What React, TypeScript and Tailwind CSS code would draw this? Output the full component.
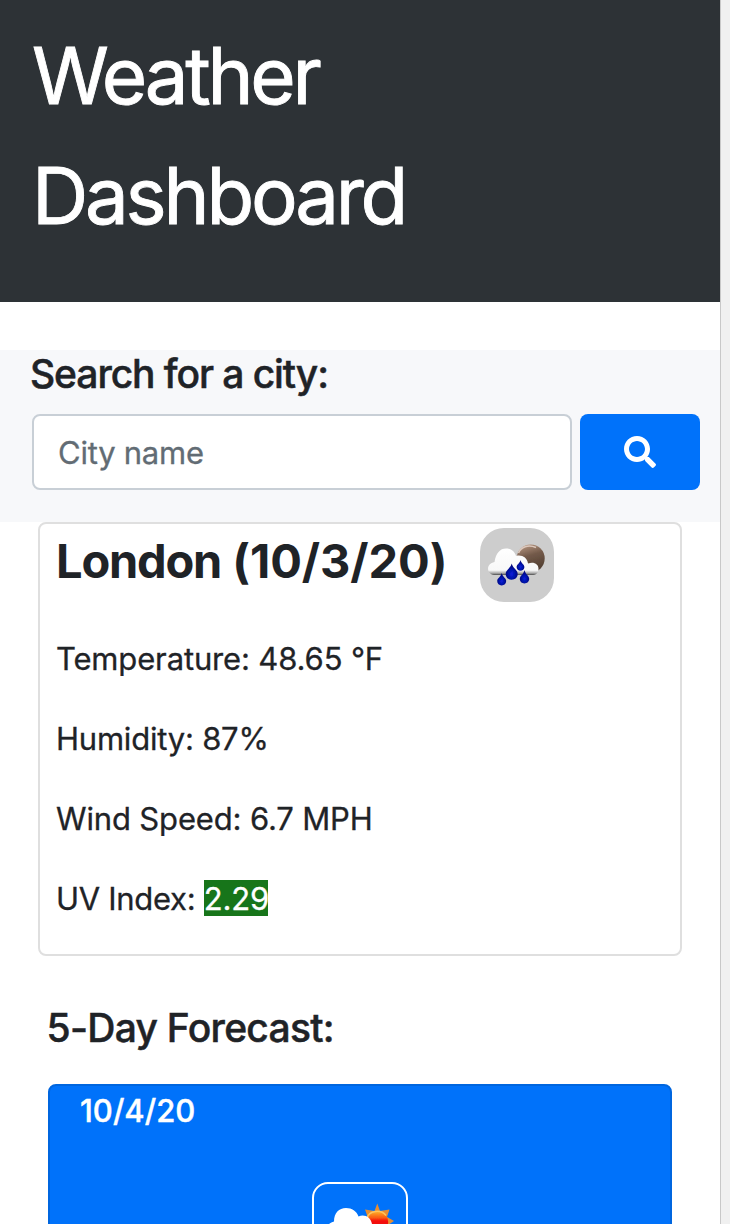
function RainIcon() {
  return (
    <svg viewBox="0 0 74 74" className="block size-[74px]" aria-hidden="true">
      <defs>
        <linearGradient id="moon" x1="0.3" y1="0" x2="0.6" y2="1">
          <stop offset="0" stopColor="#b5947f" />
          <stop offset="0.4" stopColor="#735a4a" />
          <stop offset="1" stopColor="#4d3a2d" />
        </linearGradient>
        <linearGradient id="cloud" x1="0" y1="0" x2="0" y2="1">
          <stop offset="0" stopColor="#fff" />
          <stop offset="0.82" stopColor="#f8f8f8" />
          <stop offset="0.93" stopColor="#aaa" />
          <stop offset="1" stopColor="#4a4a4a" />
        </linearGradient>
        <radialGradient id="drop" cx="0.5" cy="0.65" r="0.55">
          <stop offset="0" stopColor="#0820dc" />
          <stop offset="1" stopColor="#020678" />
        </radialGradient>
        <filter id="soft" x="-10%" y="-10%" width="120%" height="120%">
          <feGaussianBlur stdDeviation="0.6" />
        </filter>
      </defs>
      <g filter="url(#soft)">
        <circle cx="50.7" cy="30.5" r="14" fill="url(#moon)" />
        <path d="M38.5 25C41 19 48 16 56 19.500" fill="none" stroke="#dcc8bc" strokeWidth="1.600" />
        <path
          d="M14 47C6 45.500 6 35.500 14.500 34C16 25 20 20.500 26 20.500C31.500 20.500 35 24 36 28C42 26.500 47 29.500 48 35.500C54 33.500 58.500 36 58.500 41C58.500 45 56 47 52 47Z"
          fill="url(#cloud)"
        />
        <path d="M31.700 35.500C33 40.500 37.700 41.800 37.700 46C37.700 49.500 35 51.700 31.700 51.700C28.400 51.700 25.700 49.500 25.700 46C25.700 41.800 30.500 40.500 31.700 35.500Z" fill="url(#drop)" />
        <path d="M40.500 32C41.200 35.500 44.400 36.500 44.400 39C44.400 41.200 42.600 42.700 40.500 42.700C38.400 42.700 36.600 41.200 36.600 39C36.600 36.500 39.800 35.500 40.500 32Z" fill="url(#drop)" />
        <path d="M44.500 42C45.400 46.500 49.200 47.600 49.200 50.800C49.200 53.700 47 55.400 44.500 55.400C42 55.400 39.800 53.700 39.800 50.800C39.800 47.600 43.600 46.500 44.500 42Z" fill="url(#drop)" />
        <path d="M21.700 45C22.500 49 26.200 50 26.200 53C26.200 55.600 24.200 57.400 21.700 57.400C19.200 57.400 17.200 55.600 17.200 53C17.200 50 20.900 49 21.700 45Z" fill="url(#drop)" />
      </g>
    </svg>
  );
}

function SunCloudIcon() {
  return (
    <svg viewBox="0 0 92 92" className="block size-[92px]" aria-hidden="true">
      <defs>
        <linearGradient id="sun" x1="0" y1="0" x2="0" y2="1">
          <stop offset="0" stopColor="#ffb02b" />
          <stop offset="0.3" stopColor="#fa5a12" />
          <stop offset="0.45" stopColor="#f50a10" />
          <stop offset="1" stopColor="#e4000c" />
        </linearGradient>
        <filter id="sunSoft">
          <feGaussianBlur stdDeviation="0.6" />
        </filter>
      </defs>
      <g filter="url(#sunSoft)">
        <path
          d="M63.300 19.500L66 27L75.500 25.500L73 33L80 37L74 41L80 48L47 46L54 34L51 25.500L60.500 27Z"
          fill="#e88d33"
        />
        <circle cx="63.700" cy="38" r="10.500" fill="url(#sun)" />
        <path d="M53 34C55 26.500 67 25 72 31.500" fill="none" stroke="#ffc45c" strokeWidth="1.500" />
        <path
          d="M18 58C7 54 9 41 20 37.500C20 29 25 24 32 24C38 24 42.500 27 44.500 32.500C50 29.500 57 33 58 40C67 41 68 58 57 58Z"
          fill="#fff"
        />
      </g>
    </svg>
  );
}

export default function App() {
  return (
    <div className="flex h-[1224px] w-[730px] overflow-hidden bg-white font-['Inter','Liberation_Sans',sans-serif] text-[#1f2327]">
      <div className="w-[720px] shrink-0">
        <header className="h-[302px] bg-[#2d3236] px-8 pt-4 text-white">
          <h1 className="w-[420px] text-[78px] leading-[120px] font-normal tracking-[-3.25px] [-webkit-text-stroke:0.9px_currentColor]">
            <span className="block">Weather</span>
            <span className="block">Dashboard</span>
          </h1>
        </header>

        <section className="mt-12 h-[172px] bg-[#f7f8fa]">
          <h4 className="pl-[30px] text-[39px] leading-[48px] font-medium tracking-[-1.08px] [-webkit-text-stroke:0.5px_currentColor]">Search for a city:</h4>
          <form className="mt-4 flex gap-2 pl-8" onSubmit={(e) => e.preventDefault()}>
            <input
              type="text"
              placeholder="City name"
              className="h-[76px] w-[540px] rounded-lg border-2 border-[#c8cfd6] bg-white px-6 text-[31px] tracking-[-0.25px] outline-none [-webkit-text-stroke:0.3px_#626c74] placeholder:text-[#626c74] placeholder:opacity-100"
            />
            <button type="submit" aria-label="Search" className="flex h-[76px] w-[120px] items-center justify-center rounded-lg bg-[#0072fa]">
              <svg viewBox="0 0 512 512" className="size-8 fill-white" aria-hidden="true">
                <path d="M505 442.700L405.300 343c-4.500-4.500-10.600-7-17-7H372c27.600-35.300 44-79.700 44-128C416 93.100 322.900 0 208 0S0 93.100 0 208s93.100 208 208 208c48.300 0 92.700-16.400 128-44v16.300c0 6.400 2.500 12.500 7 17l99.700 99.700c9.400 9.400 24.600 9.400 33.900 0l28.300-28.300c9.400-9.400 9.400-24.600.1-34zM208 336c-70.700 0-128-57.200-128-128 0-70.700 57.200-128 128-128 70.700 0 128 57.200 128 128 0 70.700-57.200 128-128 128z" />
              </svg>
            </button>
          </form>
        </section>

        <section className="ml-[38px] h-[434px] w-[644px] rounded-lg border-2 border-[#dfdfdf] bg-white pl-4">
          <div className="flex h-[111px] items-start pt-1">
            <h2 className="w-[424px] pt-1 text-[47px] leading-[58px] font-bold tracking-[-0.05px] whitespace-nowrap">
              <span className="tracking-[-1.2px]">London</span> (10/3/20)
            </h2>
            <div className="rounded-[24px] bg-[#cdcdcd]">
              <RainIcon />
            </div>
          </div>
          <div className="flex flex-col gap-8 text-[31px] leading-[48px] [-webkit-text-stroke:0.3px_currentColor]">
            <p className="tracking-[-0.15px]">Temperature: 48.65 °F</p>
            <p className="tracking-[-0.22px]">Humidity: 87%</p>
            <p className="tracking-[-0.15px]">Wind Speed: 6.7 MPH</p>
            <p className="tracking-[-0.3px]">
              UV Index:{" "}
              <span className="inline-block h-9 w-16 bg-[#17751a] leading-[38px] tracking-[-0.2px] text-white">2.29</span>
            </p>
          </div>
        </section>

        <section className="mt-12 px-12">
          <h4 className="-ml-[1.5px] text-[39px] leading-[48px] font-medium tracking-[-0.72px] [-webkit-text-stroke:0.5px_currentColor]">5-Day Forecast:</h4>
          <article className="mt-8 h-[360px] w-[624px] rounded-lg border-2 border-[#0066df] bg-[#0072fa] pt-1.5 text-white">
            <h5 className="pl-[30px] text-[31px] leading-[38px] font-medium [-webkit-text-stroke:0.4px_currentColor]">10/4/20</h5>
            <div className="mx-auto mt-[52px] size-24 rounded-2xl border-2 border-white">
              <SunCloudIcon />
            </div>
          </article>
        </section>
      </div>
      <div className="w-[10px] border-l border-[#c8c8c8] bg-[#f0f0f0]" />
    </div>
  );
}
